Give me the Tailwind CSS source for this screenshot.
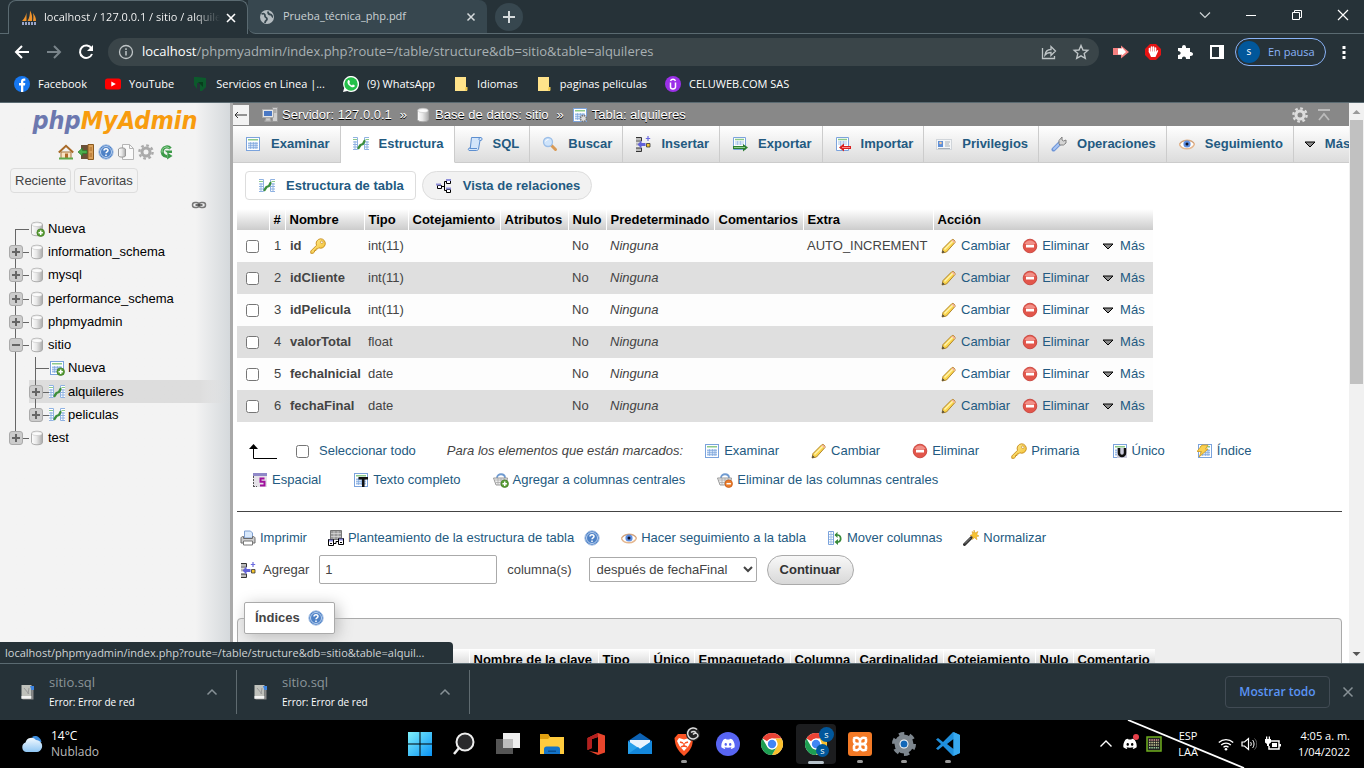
<!DOCTYPE html>
<html lang="es">
<head>
<meta charset="utf-8">
<title>localhost / 127.0.0.1 / sitio / alquileres | phpMyAdmin</title>
<script src="https://cdn.jsdelivr.net/npm/@tailwindcss/browser@4"></script>
</head>
<body class="flex h-screen flex-col overflow-hidden bg-white font-['Open_Sans','Noto_Sans',sans-serif] text-xs">

<!-- Icon sprite -->
<svg class="absolute size-0" xmlns="http://www.w3.org/2000/svg">
  <defs>
    <linearGradient id="gDb" x1="0" x2="1"><stop offset="0" stop-color="#fff"/><stop offset=".45" stop-color="#e8e8e8"/><stop offset="1" stop-color="#aaa"/></linearGradient>
    <linearGradient id="gWin" x1="0" y1="0" x2="1" y2="1"><stop offset="0" stop-color="#7ff1fb"/><stop offset="1" stop-color="#0a93f5"/></linearGradient>
    <linearGradient id="gCloud" x1="0" y1="0" x2="0" y2="1"><stop offset="0" stop-color="#f2f9ff"/><stop offset="1" stop-color="#8fc6f3"/></linearGradient>
    <linearGradient id="gKey" x1="0" y1="0" x2="1" y2="1"><stop offset="0" stop-color="#fff2a0"/><stop offset="1" stop-color="#f2b920"/></linearGradient>
  </defs>
  <symbol id="grid" viewBox="0 0 16 16"><rect x="1.500" y="1.500" width="13" height="13" fill="#fff" stroke="#7ba3dc"/><rect x="3" y="3" width="10" height="1.500" fill="#8cc98a"/><path d="M3 6h10v7H3z" fill="#cfe0f5"/><path d="M3 7.500h10M3 9.500h10M3 11.500h10M5.500 6v7M8.500 6v7M11 6v7" stroke="#7ba3dc" stroke-width=".6"/></symbol>
  <symbol id="struct" viewBox="0 0 16 16"><path d="M0 1h5v13H0zM11 1h5v13h-5z" fill="#fff"/><path d="M0 1.500h4.500v12H0M16 1.500h-4.500v12H16M0 6h5M0 8.500h5M0 11h5M11.500 6H16M11.500 8.500H16M11.500 11H16M2 5v9M14 5v9" fill="none" stroke="#8fb2e2"/><path d="M0 3.500h4M12.500 3.500H16" stroke="#8cc98a"/><path d="M5.500 12l2-3 2.500-1 1.500-3" fill="none" stroke="#3c8e3c" stroke-width="2.300" stroke-linecap="round" stroke-linejoin="round"/></symbol>
  <symbol id="sql" viewBox="0 0 16 16"><path d="M4.500 1.500H14c1.500.5 1.500 2.500 0 3h-1L11.500 13c-.3 1-1 1.500-2 1.500H2c-1-.6-1-2 .3-2.500h1z" fill="#d3e5fa" stroke="#5d8fd0"/><path d="M2.500 12.500h7.500M12.500 4.500c-1-1-.5-2.500.5-3" fill="none" stroke="#5d8fd0"/></symbol>
  <symbol id="search" viewBox="0 0 16 16"><path d="M9.500 9.500l4 4" stroke="#d99a55" stroke-width="3" stroke-linecap="round"/><circle cx="6" cy="6" r="4.500" fill="#cfe4fb" stroke="#9dbfe8" stroke-width="1.300"/><path d="M3.500 5.500a3 3 0 0 1 3-2" fill="none" stroke="#fff"/></symbol>
  <symbol id="insert" viewBox="0 0 16 16"><path d="M1 1h5v3H1zM1 12h5v3H1zM1 6.500h4v3H1z" fill="#bbb"/><path d="M1 1.500h5.500V5H1M1 15.500h5.500V12H1" fill="none" stroke="#333"/><path d="M2.500 8.500l4-4v2.500h4v3h-4v2.500z" fill="#6262d8"/><path d="M11.500 7.500h3.500v3.500h-3.500z" fill="#f5c52c" stroke="#333" stroke-width=".8"/><path d="M13 0v5M10.800 2.500h4.400" stroke="#6b6be0" stroke-width="1.200"/></symbol>
  <symbol id="export" viewBox="0 0 16 16"><path d="M1.500 1.500h12v12h-12z" fill="#fff" stroke="#7ba3dc"/><path d="M3 3.500h9" stroke="#8cc98a" stroke-width="1.500"/><path d="M3 6h9M3 8h9M5.500 5v4M8.500 5v4" stroke="#a9c4ea"/><path d="M1 11.500h11" stroke="#2e7d32" stroke-width="3"/><path d="M11 8l5 3.500-5 4z" fill="#2e7d32"/><path d="M2 11.500h11" stroke="#8cd08c"/></symbol>
  <symbol id="import" viewBox="0 0 16 16"><path d="M1.500 1.500h12v13h-12z" fill="#fff" stroke="#7ba3dc"/><path d="M3 3.500h9" stroke="#8cc98a" stroke-width="1.500"/><path d="M3 6h9M3 8h9M5.500 5v8M8.500 5v4" stroke="#a9c4ea"/><path d="M8 11.500h8" stroke="#d82020" stroke-width="3"/><path d="M9 7.500l-5 4 5 4z" fill="#d82020"/><path d="M7 11.500h8" stroke="#ff8a8a"/></symbol>
  <symbol id="priv" viewBox="0 0 16 16"><rect x=".5" y="3.500" width="15" height="10" fill="#f4f6f8" stroke="#d0d5da"/><rect x="2" y="5" width="5" height="6" fill="#5d8fd8"/><circle cx="4.500" cy="7" r="1.300" fill="#f4c9a0"/><path d="M9 6h5M9 8h4M9 10h5M2 12.500h12" stroke="#a8b0b8"/></symbol>
  <symbol id="ops" viewBox="0 0 16 16"><path d="M2.500 13.500L9 7" stroke="#6f96d8" stroke-width="4" stroke-linecap="round"/><path d="M3 13L8.500 7.500" stroke="#a9c5f2" stroke-width="2" stroke-linecap="round"/><path d="M8 8V4.500L11 1v3l1.500 1L15 4v3l-2.500 2H9z" fill="#d5d5d5" stroke="#808080"/></symbol>
  <symbol id="eye" viewBox="0 0 16 16"><path d="M.5 8.500C3 3.500 12 2.500 15.500 8 13 14 3.500 14.500.5 8.500z" fill="#fff" stroke="#e4b790" stroke-width="1.500"/><path d="M1 7.500C4 3.500 12 3.500 15 7" fill="none" stroke="#c9a080"/><circle cx="8" cy="8" r="3.600" fill="#5d8de0"/><circle cx="8" cy="8" r="1.500" fill="#112"/></symbol>
  <symbol id="tri" viewBox="0 0 16 16"><path d="M3 6h10L8 11z" fill="#8a8a8a" stroke="#000"/></symbol>
  <symbol id="pencil" viewBox="0 0 16 16"><path d="M1 15l1-4.500L11 1.500c1-.8 3.600 1.500 3 3L5.500 14z" fill="#fbd64e" stroke="#a87a20" stroke-width=".9"/><path d="M3.500 11.500L12 3" stroke="#fff3b0" stroke-width="1.500"/><path d="M10.500 2.300l3 3 .8-1.300-2.500-2.500z" fill="#f3b0a0"/><path d="M1 15l.7-2.800 2 2z" fill="#444"/></symbol>
  <symbol id="del" viewBox="0 0 16 16"><circle cx="8" cy="8" r="6.800" fill="#e2564b" stroke="#c43a32" stroke-width=".8"/><path d="M2.500 6a6 6 0 0 1 11 0z" fill="#f19088"/><rect x="4" y="6.700" width="8" height="2.800" fill="#fff"/></symbol>
  <symbol id="key" viewBox="0 0 16 16"><path d="M10.500.8a4.700 4.700 0 1 1-1.800 9L7.500 11H6v1.500H4.500V14L3 15.300H.8V13l5.700-5.700A4.700 4.700 0 0 1 10.500.8z" fill="url(#gKey)" stroke="#c58a1a" stroke-width=".9"/><circle cx="11.800" cy="4.200" r="1.300" fill="#fff" stroke="#c58a1a" stroke-width=".7"/></symbol>
  <symbol id="unique" viewBox="0 0 16 16"><use href="#grid"/><rect x="5" y="5" width="10" height="10" fill="#ccd"/><path d="M7 5v5a3 3 0 0 0 6 0V5" fill="none" stroke="#111" stroke-width="2.500"/></symbol>
  <symbol id="index" viewBox="0 0 16 16"><use href="#grid"/><path d="M5 2h6L8.500 6H11L2 14l2.500-5.500H0z" fill="#fbd050" stroke="#d09a1c" stroke-width=".8"/></symbol>
  <symbol id="spatial" viewBox="0 0 16 16"><rect x="1" y="1" width="14" height="14" fill="#e5e2e8"/><path d="M1 2.500h14" stroke="#8f88c8" stroke-width="3"/><path d="M1.500 4v11M1 14.500h4" stroke="#555" stroke-dasharray="2 1"/><path d="M12.500 6.500H8.500v3.300h4v3.700h-4.500" fill="none" stroke="#a0109c" stroke-width="2"/></symbol>
  <symbol id="fulltext" viewBox="0 0 16 16"><use href="#grid"/><path d="M5.500 5H15v2.500h-3.500V15H9V7.500H5.500z" fill="#111"/></symbol>
  <symbol id="basket" viewBox="0 0 16 16"><path d="M4 6c0-5 8-5 8 0" fill="none" stroke="#6f9ad0" stroke-width="1.800"/><path d="M.5 6h14l-1.500 7H3z" fill="#eee" stroke="#999"/><path d="M2 8h12M2.500 10.500h11M5 6v7M8 6v7M11 6v7" stroke="#aaa" stroke-width=".8"/></symbol>
  <symbol id="plusdot" viewBox="0 0 16 16"><circle cx="11.700" cy="11.700" r="3.800" fill="#5a9e36" stroke="#3c7a1e" stroke-width=".7"/><path d="M11.700 9.500v4.400M9.500 11.700h4.400" stroke="#fff" stroke-width="1.500"/></symbol>
  <symbol id="cadd" viewBox="0 0 16 16"><use href="#basket"/><use href="#plusdot"/></symbol>
  <symbol id="cdel" viewBox="0 0 16 16"><use href="#basket"/><circle cx="11.700" cy="11.700" r="3.800" fill="#ea7c2a" stroke="#c4540e" stroke-width=".7"/><path d="M9.500 11.700h4.400" stroke="#fff" stroke-width="1.500"/></symbol>
  <symbol id="print" viewBox="0 0 16 16"><path d="M4.500 1h6l2 2v5h-8z" fill="#d8e8fb" stroke="#7f9fd0"/><path d="M1 8.500C1 7 2 6.500 3.500 6.500v2h9v-2c1.500 0 2.500.5 2.500 2V13H1z" fill="#cfcfcf" stroke="#6a6a6a"/><path d="M3.500 11h9v4h-9z" fill="#fff" stroke="#777"/></symbol>
  <symbol id="propose" viewBox="0 0 16 16"><path d="M2.500.5h11v9h-11z" fill="#999" stroke="#777"/><path d="M3 3.500h10M3 6.500h10M6 1v8M10 1v8" stroke="#ddd" stroke-width=".7"/><path d="M.5 9.500h5v6h-5zM10.500 8.500h5v6h-5z" fill="#fff" stroke="#000"/><path d="M1 10.500h4M11 9.500h4" stroke="#8f8fd8" stroke-width="2"/><path d="M6 13.500h2v-2h2M2 13.500h2M12 12.500h2" fill="none" stroke="#000"/></symbol>
  <symbol id="relview" viewBox="0 0 16 16"><path d="M6 8.500h2.500M10 3.500H8.500v9H10" fill="none" stroke="#000"/><path d="M10.500 2.500h4v3h-4zM10.500 11.500h4v3h-4zM1.500 7.500h4v3h-4z" fill="#fff" stroke="#000"/><path d="M10 2h5M10 10.500h5M0 6.500h5" stroke="#8f8fd8" stroke-width="2"/></symbol>
  <symbol id="move" viewBox="0 0 16 16"><path d="M1.500 1.500h5v13h-5z" fill="#fff" stroke="#7ba3dc"/><path d="M2 4.500h4M2 7h4M2 9.500h4M2 12h4M4 2v12" stroke="#9fbfe8"/><path d="M8 5h2.500c3.500 0 4.500 5.500 1 7H9.500" fill="none" stroke="#3a8a3a" stroke-width="1.700"/><path d="M10.500 1.800V8L7.500 5zM11 9v6l-3.500-3z" fill="#3a8a3a"/></symbol>
  <symbol id="wand" viewBox="0 0 16 16"><path d="M1.500 14.500L8.500 7.500" stroke="#333" stroke-width="3" stroke-linecap="round"/><path d="M2 13.500l5.500-5.500" stroke="#888"/><path d="M11 0l1 3 3-1.500L13.700 4.500 16 6l-2.700.7.700 3-2.500-2-2 1.800.3-3L7 5.500l2.700-1.200L9 1.500l1.800 1.200z" fill="#f7c331" stroke="#d8961a" stroke-width=".5"/></symbol>
  <symbol id="help" viewBox="0 0 16 16"><circle cx="8" cy="8" r="7.200" fill="#4d81c6" stroke="#a9c3e6" stroke-width="1"/><circle cx="8" cy="8" r="5.500" fill="none" stroke="#b9d0ef"/><path d="M6 6.500c0-2.400 4-2.400 4 0C10 8 8 7.800 8 9.300M8 10.500v1.500" fill="none" stroke="#fff" stroke-width="1.500"/></symbol>
  <symbol id="home" viewBox="0 0 16 16"><path d="M3 8h10v6.500H3z" fill="#fae3c4" stroke="#a5773f"/><path d="M.8 8.500L8 1.800l7.200 6.700" fill="none" stroke="#a86a28" stroke-width="2"/><path d="M7 9.500h3v5H7z" fill="#b06a2a"/><path d="M1 14.500h14" stroke="#5fa84a" stroke-width="2"/></symbol>
  <symbol id="exit" viewBox="0 0 16 16"><path d="M3 1h8v14H3z" fill="#6b5038"/><path d="M10 .5h5.500v15H10z" fill="#d9a05a" stroke="#8a5a20"/><path d="M11.500 3h2.500v4h-2.500zM11.500 9h2.500v4h-2.500z" fill="#c08440"/><path d="M0 8l4.500-4v2.500H9v3H4.500V12z" fill="#4bae4b" stroke="#2b7a2b" stroke-width=".7"/></symbol>
  <symbol id="docs" viewBox="0 0 16 16"><path d="M4.500.5h7l4 4v11h-11z" fill="#fafafa" stroke="#b5b5b5"/><path d="M11.500.5v4h4" fill="none" stroke="#b5b5b5"/><path d="M.5 5c1-1.500 6-1.500 7 0v7c-1 1.500-6 1.500-7 0z" fill="url(#gDb)" stroke="#999"/></symbol>
  <symbol id="gear" viewBox="0 0 16 16"><circle cx="8" cy="8" r="6.600" fill="none" stroke="currentColor" stroke-width="2.400" stroke-dasharray="2.700 2.480"/><circle cx="8" cy="8" r="4" fill="none" stroke="currentColor" stroke-width="3"/></symbol>
  <symbol id="reload2" viewBox="0 0 16 16"><path d="M12.500 4.500A4.800 4.800 0 1 0 9 12.500" fill="none" stroke="#3c9a48" stroke-width="3.200"/><path d="M6.500 6.500H14V9H9.500z" fill="#3c9a48"/><path d="M9.500 8.500l5 3.500-5.500 3.500z" fill="#3c9a48"/><path d="M11.500 4.200A4.500 4.500 0 0 0 4 8.500" fill="none" stroke="#9ad8a0"/></symbol>
  <symbol id="link" viewBox="0 0 16 16"><rect x="1.500" y="5.500" width="6.500" height="5" rx="2.500" fill="none" stroke="#777" stroke-width="1.500"/><rect x="8" y="5.500" width="6.500" height="5" rx="2.500" fill="none" stroke="#777" stroke-width="1.500"/><path d="M4.500 8h7" stroke="#444" stroke-width="1.500"/></symbol>
  <symbol id="db" viewBox="0 0 16 16"><path d="M2.500 3.500c0-3 11-3 11 0v9c0 3-11 3-11 0z" fill="url(#gDb)" stroke="#a5a5a5" stroke-width=".9"/><ellipse cx="8" cy="3.600" rx="5" ry="2" fill="#fbfbfb" stroke="#c5c5c5" stroke-width=".6"/></symbol>
  <symbol id="dbadd" viewBox="0 0 16 16"><use href="#db"/><use href="#plusdot"/></symbol>
  <symbol id="tbladd" viewBox="0 0 16 16"><use href="#grid"/><use href="#plusdot"/></symbol>
  <symbol id="server" viewBox="0 0 16 16"><path d="M10.500.5h5v14h-5z" fill="#cfcfcf" stroke="#999"/><path d="M11.500 3h3M11.500 5h3" stroke="#888"/><path d="M.5 2.500h11v8H.5z" fill="#e6e6e6" stroke="#aaa"/><path d="M2 4h8v5H2z" fill="#4a78c4"/><path d="M4 11.500h4v2H4zM2.500 14h7" fill="#ccc" stroke="#bbb"/></symbol>
  <symbol id="tblgear" viewBox="0 0 16 16"><use href="#grid"/><circle cx="11.500" cy="11.500" r="3" fill="#ddd" stroke="#777" stroke-width="1.500" stroke-dasharray="1.600 .75"/></symbol>
  <symbol id="chrome" viewBox="0 0 24 24"><circle cx="12" cy="12" r="11" fill="#fff"/><path d="M12 1a11 11 0 0 1 9.530 5.500H12a5.500 5.500 0 0 0-4.760 2.750L2.470 6.500A11 11 0 0 1 12 1z" fill="#ea4335"/><path d="M21.530 6.500A11 11 0 0 1 12 23l4.760-8.250a5.500 5.500 0 0 0 0-5.500L15.500 6.500z" fill="#fbc02d"/><path d="M2.470 6.500A11 11 0 0 0 12 23l4.760-8.250a5.500 5.500 0 0 1-9.520 0z" fill="#1e9e52"/><circle cx="12" cy="12" r="5.400" fill="#fff"/><circle cx="12" cy="12" r="4.200" fill="#4285f4"/></symbol>
  <symbol id="discord" viewBox="0 0 24 24"><path d="M18.900 5.500A17 17 0 0 0 14.800 4.200l-.6 1.200a16 16 0 0 0-4.500 0L9.100 4.200A17 17 0 0 0 5 5.500C2.400 9.400 1.700 13.200 2 17a17 17 0 0 0 5.100 2.600l1.100-1.800-1.700-.9.400-.3a12 12 0 0 0 10.200 0l.4.300-1.700.9 1.100 1.800A17 17 0 0 0 22 17c.4-4.400-.7-8.200-3.100-11.500zM8.600 14.600c-1 0-1.800-.9-1.800-2s.8-2 1.800-2 1.800.9 1.800 2-.8 2-1.800 2zm6.700 0c-1 0-1.800-.9-1.800-2s.8-2 1.800-2 1.800.9 1.800 2-.8 2-1.800 2z" fill="#fff"/></symbol>
  <symbol id="folder" viewBox="0 0 16 16"><path d="M2 1h11v10.500h1V15H2z" fill="#ffe38a"/><path d="M12.500 11h2v3.500H12z" fill="#f2c94c"/></symbol>
  <symbol id="file" viewBox="0 0 16 16"><path d="M1.500 1h10v14h-10z" fill="#bfc1bb"/><path d="M1.500 12h10v2.500h-10z" fill="#f4f4f4"/><path d="M11.500 4h2v11.500h-11V15h9z" fill="#888"/><path d="M10 2h4v4h-2.500z" fill="#3d84e0"/><path d="M4 4l5 6M9 4l-1 6" stroke="#999"/></symbol>
</svg>

<!-- Browser chrome -->
<header class="flex shrink-0 flex-col bg-[#263238] text-white">
  <div class="flex h-[34px]">
    <div class="w-2 border-b border-[#5a6a71]"></div>
    <div class="flex w-[240px] items-center rounded-t-lg border-x border-t border-[#5a6a71] pr-2 pl-3">
      <svg class="size-4 shrink-0" viewBox="0 0 16 16"><path d="M1 11c3-3 4-6 4.500-8.500V11zM6.500 11c2-3 2.500-7 2.500-10.500 2 3 2.500 7 2 10.500zM12 11c.5-3 .5-5 0-8 2 2.500 3 5 3 8z" fill="#f0932b"/><path d="M1 13.500h14" stroke="#9aa5c8" stroke-width="3" stroke-dasharray="2 1"/></svg>
      <span class="ml-[7px] w-[176px] overflow-hidden bg-gradient-to-r from-white from-85% to-transparent bg-clip-text text-[11px] whitespace-nowrap text-transparent">localhost / 127.0.0.1 / sitio / alquileres</span>
      <button aria-label="Cerrar pestaña" class="ml-auto"><svg class="size-4" viewBox="0 0 16 16"><path d="M4 4l8 8M12 4l-8 8" stroke="#fff" stroke-width="1.600"/></svg></button>
    </div>
    <div class="flex w-[239px] items-center rounded-tr-lg rounded-bl-lg border-b border-[#5a6a71] bg-[#37474f] pr-2 pl-[11px] text-[#c9d1d4]">
      <svg class="size-4 shrink-0" viewBox="0 0 16 16"><circle cx="8" cy="8" r="7" fill="#b4bcc0"/><path d="M2.500 5C5 4 6 5 6 7s2 1 2 3-2 1-2 4" fill="none" stroke="#37474f" stroke-width="1.800"/><path d="M9 2.500c0 2 1 3 2.500 3S13 8 14 8" fill="none" stroke="#37474f" stroke-width="1.800"/></svg>
      <span class="ml-2 text-[11px]">Prueba_técnica_php.pdf</span>
      <button aria-label="Cerrar pestaña" class="ml-auto"><svg class="size-4" viewBox="0 0 16 16"><path d="M4.500 4.500l7 7M11.500 4.500l-7 7" stroke="#d5dadc" stroke-width="1.500"/></svg></button>
    </div>
    <div class="flex flex-1 items-center border-b border-[#5a6a71] pl-2">
      <button aria-label="Nueva pestaña" class="flex size-7 items-center justify-center rounded-full bg-[#37474f]"><svg class="size-4" viewBox="0 0 16 16"><path d="M8 2v12M2 8h12" stroke="#d5dadc" stroke-width="2"/></svg></button>
      <div class="mr-[13px] mb-1 ml-auto flex gap-[30px]">
        <button aria-label="Buscar pestañas"><svg class="size-4" viewBox="0 0 16 16"><path d="M3 5.500l5 5 5-5" fill="none" stroke="#cfd4d6" stroke-width="1.200"/></svg></button>
        <button aria-label="Minimizar"><svg class="size-4" viewBox="0 0 16 16"><path d="M3 8.500h10" stroke="#fff"/></svg></button>
        <button aria-label="Restaurar"><svg class="size-4" viewBox="0 0 16 16"><path d="M3.500 5.500h7v7h-7zM5.500 5V3.500h7v7H11" fill="none" stroke="#fff"/></svg></button>
        <button aria-label="Cerrar"><svg class="size-4" viewBox="0 0 16 16"><path d="M3 3l10 10M13 3L3 13" stroke="#fff" stroke-width="1.200"/></svg></button>
      </div>
    </div>
  </div>
  <div class="flex h-9 items-center pr-3 pl-3">
    <button aria-label="Atrás" class="mr-3"><svg class="size-5" viewBox="0 0 20 20"><path d="M17 10H4M10 4l-6 6 6 6" fill="none" stroke="#fff" stroke-width="2"/></svg></button>
    <button aria-label="Adelante" class="mr-3"><svg class="size-5" viewBox="0 0 20 20"><path d="M3 10h13M10 4l6 6-6 6" fill="none" stroke="#79848a" stroke-width="2"/></svg></button>
    <button aria-label="Recargar" class="mr-3"><svg class="size-5" viewBox="0 0 20 20"><path d="M15.500 6.500A6.200 6.200 0 1 0 16 12" fill="none" stroke="#fff" stroke-width="2"/><path d="M17 3v6h-6z" fill="#fff"/></svg></button>
    <div class="flex h-7 flex-1 items-center rounded-full bg-[#3a4549] pr-2 pl-[10px]">
      <svg class="size-4" viewBox="0 0 16 16"><circle cx="8" cy="8" r="6.500" fill="none" stroke="#bfc5c7" stroke-width="1.300"/><path d="M8 7v4.500M8 4.300v1.600" stroke="#bfc5c7" stroke-width="1.500"/></svg>
      <div class="ml-2 text-[13px] text-[#a9b1b4]"><span class="text-white">localhost</span>/phpmyadmin/index.php?route=/table/structure&amp;db=sitio&amp;table=alquileres</div>
      <button aria-label="Compartir" class="ml-auto"><svg class="size-5" viewBox="0 0 20 20"><path d="M3.500 6v10.500h12V14M6 13c.5-4 3-5.500 6-5.500V4.500l4.500 4.500-4.500 4.500v-3c-2.500 0-4.500.5-6 2.500z" fill="none" stroke="#bfc5c7" stroke-width="1.300"/></svg></button>
      <button aria-label="Añadir a marcadores" class="ml-3"><svg class="size-5" viewBox="0 0 20 20"><path d="M10 3.500l2 4.500 4.800.4-3.600 3.200 1.100 4.800L10 13.900l-4.300 2.500 1.100-4.800-3.600-3.200L8 8z" fill="none" stroke="#bfc5c7" stroke-width="1.400"/></svg></button>
    </div>
    <div class="mr-[10px] ml-[14px] flex gap-4">
      <svg class="size-4" viewBox="0 0 16 16"><path d="M0 4h8V1.500L16 8l-8 6.500V11H0z" fill="#f58080"/><path d="M5 4.500h4V3.500l4 4.500-4 3.500v-1H5z" fill="#fff"/></svg>
      <svg class="size-4" viewBox="0 0 16 16"><path d="M5 0h6l5 5v6l-5 5H5l-5-5V5z" fill="#e51313"/><path d="M4.500 8V4.500M6.500 8V3M8.500 8V3M10.500 8V4" stroke="#fff" stroke-width="1.600" stroke-linecap="round"/><path d="M3.700 7.500h7.600l1-1.500 1 .8L10.500 13H6z" fill="#fff"/></svg>
      <svg class="size-4" viewBox="0 0 16 16"><path d="M1 4h4C4.500 0 9.500 0 9 4h4v4c4-.5 4 4.500 0 4v3H9c.3-3.500-4.300-3.500-4 0H1v-4c3.500 0 3.500-4 0-4z" fill="#fff"/></svg>
      <svg class="size-4" viewBox="0 0 16 16"><path d="M2 2h12v12H2z" fill="none" stroke="#fff" stroke-width="2"/><path d="M10 2h4v12h-4z" fill="#fff"/></svg>
    </div>
    <button class="flex h-7 w-[91px] items-center rounded-full border border-[#8ab4f8] pl-[2px] text-[11px] text-[#8ab4f8]"><span class="mr-2 flex size-[22px] items-center justify-center rounded-full bg-[#01579b] text-[10px] text-white">s</span>En pausa</button>
    <button aria-label="Menú" class="ml-[10px]"><svg class="size-4" viewBox="0 0 16 16"><path d="M6.500 2h3v3h-3zM6.500 7h3v3h-3zM6.500 12h3v3h-3z" fill="#fff"/></svg></button>
  </div>
  <nav class="flex h-[33px] items-center gap-[18px] border-b border-[#5a6a71] pb-1 pl-[14px] text-[11px]">
    <a href="#" class="flex items-center gap-2"><svg class="size-4" viewBox="0 0 16 16"><circle cx="8" cy="8" r="8" fill="#1677f0"/><path d="M7 16V9.500H5V7h2V5.500C7 3.500 8 2.500 10 2.500h1.300v2.200h-1c-.8 0-1 .4-1 1V7h2L11 9.500H9.300V16z" fill="#fff"/></svg>Facebook</a>
    <a href="#" class="flex items-center gap-2"><svg class="size-4" viewBox="0 0 16 16"><rect y="2.500" width="16" height="11" rx="2.500" fill="#f00"/><path d="M6.300 5.500v5L10.800 8z" fill="#fff"/></svg>YouTube</a>
    <a href="#" class="flex items-center gap-2"><svg class="size-4" viewBox="0 0 16 16"><path d="M2 1h3l9 1v9l-4 4H8V7H5v6L2 9z" fill="#0c5a2c"/><path d="M6 6h5v5z" fill="#073d1c"/></svg>Servicios en Linea |...</a>
    <a href="#" class="flex items-center gap-2"><svg class="size-4" viewBox="0 0 16 16"><path d="M0 16l1.200-4A8 8 0 1 1 4.300 15z" fill="#fff"/><circle cx="8" cy="8" r="6.700" fill="#25c04a"/><path d="M5 4.500c1-1 1.500 0 2 1.500L6.300 7c.5 1 1.500 2 2.700 2.500l.8-1c1.200.3 2.500 1 2 1.800-2 3-8-1.500-7.300-4.800z" fill="#fff"/></svg>(9) WhatsApp</a>
    <a href="#" class="flex items-center gap-2"><svg class="size-4"><use href="#folder"/></svg>Idiomas</a>
    <a href="#" class="flex items-center gap-2"><svg class="size-4"><use href="#folder"/></svg>paginas peliculas</a>
    <a href="#" class="flex items-center gap-2"><svg class="size-4" viewBox="0 0 16 16"><circle cx="8" cy="8" r="8" fill="#9b30e8"/><path d="M5.500 6.500v4.500a2.500 2 0 0 0 5 0V6.500M5.500 4.800c1-2 4-2 5 0" fill="none" stroke="#fff" stroke-width="1.500"/></svg>CELUWEB.COM SAS</a>
  </nav>
</header>

<!-- phpMyAdmin -->
<div class="relative flex min-h-0 flex-1 overflow-hidden font-['Liberation_Sans',Arial,sans-serif] text-[13px] leading-4 text-[#444]">
  <aside class="flex w-[230px] shrink-0 flex-col bg-gradient-to-r from-[#f3f3f3] from-85% to-[#d5d9dc]">
    <a href="#" class="mt-1 text-center font-['DejaVu_Sans_Condensed','DejaVu_Sans',sans-serif] text-[25px] leading-7 font-bold text-[#f89c0e] italic"><span class="text-[#6c78af]">php</span>MyAdmin</a>
    <div class="mt-[9px] ml-[58px] flex gap-1 text-[#aaa]">
      <svg class="size-4"><use href="#home"/></svg><svg class="size-4"><use href="#exit"/></svg><svg class="size-4"><use href="#help"/></svg><svg class="size-4"><use href="#docs"/></svg><svg class="size-4"><use href="#gear"/></svg><svg class="size-4"><use href="#reload2"/></svg>
    </div>
    <div class="mt-2 ml-[10px] flex gap-[3px]">
      <button class="h-[25px] rounded border border-[#ddd] px-1">Reciente</button>
      <button class="h-[25px] rounded border border-[#ddd] px-1">Favoritas</button>
    </div>
    <svg class="mt-1 ml-[191px] size-4"><use href="#link"/></svg>
    <ul id="tree" class="mt-[4px] flex h-[233px] flex-col text-black"></ul>
  </aside>
  <div class="w-[3px] shrink-0 bg-[#aaa]"></div>

  <main class="flex min-w-0 flex-1 flex-col overflow-hidden bg-white">
    <div class="flex h-[23px] shrink-0 items-center bg-[#888] text-white [text-shadow:0_1px_0_#000]">
      <button aria-label="Ocultar panel" class="mr-[13px] flex h-5 w-4 items-center justify-center bg-[#f3f3f3]"><svg class="h-3 w-4" viewBox="0 0 16 12"><path d="M14 6H2M5 3L2 6l3 3" fill="none" stroke="#333"/></svg></button>
      <svg class="size-4"><use href="#server"/></svg><a href="#" class="ml-1">Servidor: 127.0.0.1</a><span class="mx-2">»</span>
      <svg class="size-4"><use href="#db"/></svg><a href="#" class="ml-1">Base de datos: sitio</a><span class="mx-2">»</span>
      <svg class="size-4"><use href="#tblgear"/></svg><a href="#" class="ml-1">Tabla: alquileres</a>
      <svg class="ml-auto size-4 text-[#ddd]"><use href="#gear"/></svg>
      <svg class="mr-[17px] ml-2 size-4" viewBox="0 0 16 16"><path d="M2 3h12M3 13l5-6 5 6" fill="none" stroke="#bbb" stroke-width="1.800"/></svg>
    </div>
    <nav class="flex h-[37px] shrink-0 overflow-hidden font-bold text-[#235a81]" id="tabs"></nav>
    <div class="mt-2 ml-3 flex shrink-0 gap-[6px] font-bold text-[#235a81]">
      <a href="#" class="flex h-[29px] items-center gap-[11px] rounded border border-[#ddd] bg-white pr-[11px] pl-[13px]"><svg class="size-4"><use href="#struct"/></svg>Estructura de tabla</a>
      <a href="#" class="flex h-[29px] items-center gap-[11px] rounded-full border border-[#ddd] bg-[#f2f2f2] pr-[11px] pl-[13px]"><svg class="size-4"><use href="#relview"/></svg>Vista de relaciones</a>
    </div>

    <table class="mt-[9px] ml-1 w-[916px] shrink-0 table-fixed border-collapse">
      <colgroup><col class="w-[32px]"><col class="w-[16px]"><col class="w-[79px]"><col class="w-[44px]"><col class="w-[92px]"><col class="w-[68px]"><col class="w-[38px]"><col class="w-[108px]"><col class="w-[89px]"><col class="w-[130px]"><col class="w-[220px]"></colgroup>
      <thead>
        <tr class="h-[21px] bg-gradient-to-b from-white to-[#ccc] text-left whitespace-nowrap text-black">
          <th></th><th class="border-l border-white pl-1">#</th><th class="border-l border-white pl-1">Nombre</th><th class="border-l border-white pl-1">Tipo</th><th class="border-l border-white pl-1">Cotejamiento</th><th class="border-l border-white pl-1">Atributos</th><th class="border-l border-white pl-1">Nulo</th><th class="border-l border-white pl-1">Predeterminado</th><th class="border-l border-white pl-1">Comentarios</th><th class="border-l border-white pl-1">Extra</th><th class="border-l border-white pl-1">Acción</th>
        </tr>
      </thead>
      <tbody id="columns"></tbody>
    </table>

    <div class="mt-[19px] ml-4 flex h-5 shrink-0 items-center whitespace-nowrap text-[#235a81]">
      <svg class="h-[15px] w-7" viewBox="0 0 28 15"><path d="M4.500 3v11.500H28" fill="none" stroke="#000"/><path d="M0 5h9L4.500 0z" fill="#000"/></svg>
      <label class="ml-[19px] flex items-center gap-[10px]"><input type="checkbox" class="size-[13px]">Seleccionar todo</label>
      <i class="mr-[21px] ml-[31px] text-[#444]">Para los elementos que están marcados:</i>
      <div class="flex gap-8">
        <button class="flex gap-1"><svg class="size-4"><use href="#grid"/></svg>Examinar</button>
        <button class="flex gap-1"><svg class="size-4"><use href="#pencil"/></svg>Cambiar</button>
        <button class="flex gap-1"><svg class="size-4"><use href="#del"/></svg>Eliminar</button>
        <button class="flex gap-1"><svg class="size-4"><use href="#key"/></svg>Primaria</button>
        <button class="flex gap-1"><svg class="size-4"><use href="#unique"/></svg>Único</button>
        <button class="flex gap-1"><svg class="size-4"><use href="#index"/></svg>Índice</button>
      </div>
    </div>
    <div class="mt-[9px] ml-[19px] flex h-5 shrink-0 items-center gap-8 whitespace-nowrap text-[#235a81]">
      <button class="flex gap-1"><svg class="size-4"><use href="#spatial"/></svg>Espacial</button>
      <button class="flex gap-1"><svg class="size-4"><use href="#fulltext"/></svg>Texto completo</button>
      <button class="flex gap-1"><svg class="size-4"><use href="#cadd"/></svg>Agregar a columnas centrales</button>
      <button class="flex gap-1"><svg class="size-4"><use href="#cdel"/></svg>Eliminar de las columnas centrales</button>
    </div>
    <hr class="mt-[21px] mr-[7px] ml-1 shrink-0 border-[#444]">
    <div class="mt-[18px] ml-[7px] flex shrink-0 gap-[21px] whitespace-nowrap text-[#235a81]">
      <a href="#" class="flex gap-1"><svg class="size-4"><use href="#print"/></svg>Imprimir</a>
      <span class="flex gap-1"><svg class="size-4"><use href="#propose"/></svg><a href="#">Planteamiento de la estructura de tabla</a><svg class="ml-[6px] size-4"><use href="#help"/></svg></span>
      <a href="#" class="flex gap-1"><svg class="size-4"><use href="#eye"/></svg>Hacer seguimiento a la tabla</a>
      <a href="#" class="flex gap-1"><svg class="size-4"><use href="#move"/></svg>Mover columnas</a>
      <a href="#" class="flex gap-1"><svg class="size-4"><use href="#wand"/></svg>Normalizar</a>
    </div>
    <form class="mt-2 ml-[7px] flex h-[31px] shrink-0 items-center whitespace-nowrap">
      <svg class="size-4"><use href="#insert"/></svg>
      <label for="num" class="mr-[10px] ml-[7px]">Agregar</label>
      <input id="num" type="text" value="1" class="h-[29px] w-[178px] rounded-xs border border-[#aaa] bg-white px-[5px]">
      <label for="pos" class="mr-[17px] ml-[10px]">columna(s)</label>
      <select id="pos" class="h-[25px] w-[168px] rounded-xs border border-[#aaa] bg-white pl-[3px]"><option>después de fechaFinal</option></select>
      <button type="button" class="ml-[10px] h-[30px] rounded-full border border-[#aaa] bg-gradient-to-b from-[#f8f8f8] to-[#d8d8d8] px-3 font-bold text-[#333]">Continuar</button>
    </form>
    <fieldset class="mt-[17px] mr-[7px] ml-1 h-40 shrink-0 rounded-t border border-[#aaa] bg-[#eee] px-[6px]">
      <legend class="flex h-8 items-center gap-2 rounded-xs border border-[#aaa] bg-white px-[10px] font-bold shadow-[3px_3px_15px_#bbb]">Índices <svg class="size-4"><use href="#help"/></svg></legend>
      <table class="mt-[15px] w-[911px] table-fixed border-collapse">
        <colgroup><col class="w-[225px]"><col class="w-[129px]"><col class="w-[51px]"><col class="w-[45px]"><col class="w-[96px]"><col class="w-[65px]"><col class="w-[88px]"><col class="w-[92px]"><col class="w-[38px]"><col class="w-[82px]"></colgroup>
        <thead><tr class="h-[22px] bg-gradient-to-b from-white to-[#ccc] text-left whitespace-nowrap text-black"><th></th><th class="border-l border-white pl-1">Nombre de la clave</th><th class="border-l border-white pl-1">Tipo</th><th class="border-l border-white pl-1">Único</th><th class="border-l border-white pl-1">Empaquetado</th><th class="border-l border-white pl-1">Columna</th><th class="border-l border-white pl-1">Cardinalidad</th><th class="border-l border-white pl-1">Cotejamiento</th><th class="border-l border-white pl-1">Nulo</th><th class="border-l border-white pl-1">Comentario</th></tr></thead>
      </table>
    </fieldset>
  </main>

  <!-- Scrollbar -->
  <div class="flex w-[15px] shrink-0 flex-col items-center bg-[#f1f1f1]">
    <svg class="h-[17px] w-[15px]" viewBox="0 0 15 17"><path d="M3.500 11h8l-4-4z" fill="#999"/></svg>
    <div class="h-[264px] w-[13px] bg-[#c1c1c1]"></div>
    <svg class="mt-auto h-[17px] w-[15px]" viewBox="0 0 15 17"><path d="M3.500 6h8l-4 4z" fill="#555"/></svg>
  </div>
  <div class="absolute bottom-0 left-0 flex h-[21px] w-[453px] items-center rounded-tr bg-[#263238] pl-[5px] font-['Open_Sans',sans-serif] text-[11px] whitespace-nowrap text-[#cfd4d6]">localhost/phpmyadmin/index.php?route=/table/structure&amp;db=sitio&amp;table=alquil...</div>
</div>

<!-- Downloads bar -->
<section class="flex h-[57px] shrink-0 items-center border-t border-[#5a6a71] bg-[#263238]">
  <div class="flex h-11 w-[237px] items-center border-r border-[#5f6b70] pr-4 pl-5">
    <svg class="size-4"><use href="#file"/></svg>
    <div class="ml-[13px]"><p class="text-[13px] leading-5 text-[#8b9599]">sitio.sql</p><p class="text-[10px] leading-5 text-white">Error: Error de red</p></div>
    <button aria-label="Opciones" class="ml-auto"><svg class="size-4" viewBox="0 0 16 16"><path d="M3.500 10.500L8 6l4.500 4.500" fill="none" stroke="#879196" stroke-width="1.500"/></svg></button>
  </div>
  <div class="flex h-11 w-[233px] items-center border-r border-[#5f6b70] pr-4 pl-4">
    <svg class="size-4"><use href="#file"/></svg>
    <div class="ml-[13px]"><p class="text-[13px] leading-5 text-[#8b9599]">sitio.sql</p><p class="text-[10px] leading-5 text-white">Error: Error de red</p></div>
    <button aria-label="Opciones" class="ml-auto"><svg class="size-4" viewBox="0 0 16 16"><path d="M3.500 10.500L8 6l4.500 4.500" fill="none" stroke="#879196" stroke-width="1.500"/></svg></button>
  </div>
  <button class="ml-auto h-8 w-[105px] rounded border border-[#414b54] text-xs font-semibold text-[#5a94f5]">Mostrar todo</button>
  <button aria-label="Cerrar descargas" class="mr-2 ml-[10px]"><svg class="size-4" viewBox="0 0 16 16"><path d="M3.500 3.500l9 9M12.500 3.500l-9 9" stroke="#879196" stroke-width="1.500"/></svg></button>
</section>

<!-- Taskbar -->
<footer class="relative grid h-12 shrink-0 grid-cols-[1fr_auto_1fr] items-center bg-black pl-1 text-white">
  <div class="flex items-center pl-4">
    <svg class="h-6 w-6" viewBox="0 0 24 24"><path d="M12 5c3-2 8-1 9.500 5l-5 1z" fill="#3f8fe0"/><path d="M6 20a5 5 0 0 1-.5-9.500A6 6 0 0 1 16 8c4 0 7 4 6 7.500-.7 2.500-3 4.500-5 4.500z" fill="url(#gCloud)"/></svg>
    <div class="ml-[7px] leading-4"><p>14°C</p><p class="text-[#bbb]">Nublado</p></div>
  </div>
  <div class="flex h-12">
    <button aria-label="Inicio" class="flex w-11 items-center justify-center"><svg class="size-6" viewBox="0 0 24 24"><path d="M0 0h11.500v11.500H0zM12.500 0H24v11.500H12.500zM0 12.500h11.500V24H0zM12.500 12.500H24V24H12.500z" fill="url(#gWin)"/></svg></button>
    <button aria-label="Buscar" class="flex w-11 items-center justify-center"><svg class="size-6" viewBox="0 0 24 24"><circle cx="13" cy="10" r="8.500" fill="#2a2a2c" stroke="#eee" stroke-width="2"/><path d="M7 16l-5 6" stroke="#eee" stroke-width="2.500"/></svg></button>
    <button aria-label="Vista de tareas" class="flex w-11 items-center justify-center"><svg class="size-6" viewBox="0 0 24 24"><path d="M7 1h17v15H7z" fill="#eee"/><path d="M0 7h17v15H0z" fill="#555"/><path d="M7 7h10v9H7z" fill="#bdbdbd"/></svg></button>
    <button aria-label="Explorador" class="flex w-11 items-center justify-center"><svg class="size-6" viewBox="0 0 24 24"><path d="M0 2h8l2 3h14v17H0z" fill="#ffcb3d"/><path d="M0 2h8l2 3-2 2H0z" fill="#e0a010"/><path d="M4 22v-5c0-1.500 1-2.500 2.500-2.500h11c1.500 0 2.500 1 2.500 2.500v5z" fill="#1373c8"/><path d="M8 18.500h8V20H8z" fill="#0a4f90"/></svg></button>
    <button aria-label="Office" class="flex w-11 items-center justify-center"><svg class="size-6" viewBox="0 0 24 24"><path d="M14 1l7 2.500v17L14 23l-9-4 9 1.500V5L8 7v9l-4.500 2V6z" fill="#e8452c"/><path d="M14 1l-10.500 5v12L8 16V7l6-2z" fill="#b31f1f"/></svg></button>
    <button aria-label="Correo" class="flex w-11 items-center justify-center"><svg class="size-6" viewBox="0 0 24 24"><path d="M0 9L12 1l12 8v13H0z" fill="#0c62b4"/><path d="M2 8h20v4l-10 8L2 12z" fill="#e8f3fd"/><path d="M0 9l12 8 12-8v13H0z" fill="#28a0ea"/><path d="M0 22l10-7 2 2 12-8v13z" fill="#1488dc"/></svg></button>
    <button aria-label="Brave" class="relative flex w-11 items-center justify-center"><svg class="size-6" viewBox="0 0 24 24"><path d="M6 2h11l4 4-.5 5c-.5 5-4 9-8.500 13C7.500 20 4 16 3 10L2.500 6z" fill="#fb5424"/><path d="M7 6l5 1.500L17 6l2 3-2.500 5-4.500 5-4.500-5L5 9z" fill="#fff"/><path d="M8 10l3 1M16 10l-3 1M12 11v4M9 15l3-1.500 3 1.500" stroke="#fb5424" stroke-width="1.500"/></svg><svg class="absolute top-[7px] right-[6px] size-[14px]" viewBox="0 0 14 14"><circle cx="7" cy="7" r="7" fill="#222"/><path d="M11 2.500A5.500 5.500 0 1 0 12 9C12 6 9 5.500 7 7.500M5 5.500c2-2 5-1 5 1" fill="none" stroke="#ddd" stroke-width="1.500"/></svg><span class="absolute bottom-[5px] h-[3px] w-[6px] rounded-full bg-[#999]"></span></button>
    <button aria-label="Discord" class="flex w-11 items-center justify-center"><span class="flex size-6 items-center justify-center rounded-full bg-[#5865f2]"><svg class="size-4"><use href="#discord"/></svg></span></button>
    <button aria-label="Chrome" class="flex w-11 items-center justify-center"><svg class="size-6"><use href="#chrome"/></svg></button>
    <button aria-label="Chrome, perfil s" class="relative mx-[2px] my-1 flex w-10 items-center justify-center rounded bg-[#1c1d1f]"><svg class="size-6"><use href="#chrome"/></svg><span class="absolute top-[3px] right-[2px] flex size-[15px] items-center justify-center rounded-full bg-[#01579b] text-[9px]">s</span><span class="absolute right-[7px] bottom-[7px] flex size-[13px] items-center justify-center rounded-full bg-[#01579b] text-[9px]">s</span><span class="absolute bottom-0 h-[3px] w-4 rounded-full bg-[#b8c4cc]"></span></button>
    <button aria-label="XAMPP" class="relative flex w-11 items-center justify-center"><svg class="size-6" viewBox="0 0 24 24"><rect width="24" height="24" rx="3" fill="#f37a26"/><path d="M5.500 6.500C9 5 11 6 12 8.500 13 6 15 5 18.500 6.500M5.500 17.500C9 19 11 18 12 15.500 13 18 15 19 18.500 17.500M6 6.500v3C6 11 8 12 12 12s6-1 6-2.500v-3M6 17.500v-3C6 13 8 12 12 12s6 1 6 2.500v3M12 8.500v7" fill="none" stroke="#fff" stroke-width="2.600" stroke-linejoin="round"/></svg><span class="absolute bottom-[5px] h-[3px] w-[6px] rounded-full bg-[#999]"></span></button>
    <button aria-label="Configuración" class="relative flex w-11 items-center justify-center"><svg class="size-6" viewBox="0 0 24 24"><circle cx="12" cy="12" r="10" fill="none" stroke="#7d868e" stroke-width="4" stroke-dasharray="5.200 5.270"/><circle cx="12" cy="12" r="7" fill="#fff" stroke="#7d868e" stroke-width="5"/><circle cx="12" cy="12" r="3.500" fill="#1267b8"/></svg><span class="absolute bottom-[5px] h-[3px] w-[6px] rounded-full bg-[#999]"></span></button>
    <button aria-label="Visual Studio Code" class="relative flex w-11 items-center justify-center"><svg class="size-6" viewBox="0 0 24 24"><path d="M17 0l7 3v18l-7 3L7 14l-5 4-2-1.500L5 12 0 7.500 2 6l5 4zM17.500 7L11 12l6.500 5z" fill="#1f8fdc" fill-rule="evenodd"/><path d="M17.500 0L24 3v18l-6.500 3z" fill="#37a9f0"/></svg><span class="absolute bottom-[5px] h-[3px] w-[6px] rounded-full bg-[#999]"></span></button>
  </div>
  <div class="flex items-center justify-end pr-[14px]">
    <svg class="size-4" viewBox="0 0 16 16"><path d="M2.500 10.500L8 5l5.500 5.500" fill="none" stroke="#fff" stroke-width="1.400"/></svg>
    <span class="relative ml-2"><svg class="size-4"><use href="#discord"/></svg><span class="absolute -top-[2px] -right-[1px] size-[6px] rounded-full bg-[#e8404a]"></span></span>
    <svg class="ml-2 size-4" viewBox="0 0 16 16"><rect x="1" y="1" width="14" height="14" fill="#222" stroke="#6fae1e" stroke-width="1.500"/><path d="M3 4h10" stroke="#d99" stroke-width="1.500" stroke-dasharray="1.500 .8"/><path d="M3 6.500h10M3 9h10" stroke="#cc9" stroke-width="1.500" stroke-dasharray="1.500 .8"/><path d="M3 11.700h10" stroke="#9c9" stroke-width="1.500" stroke-dasharray="1.500 .8"/></svg>
    <p class="ml-4 text-center text-[11px] leading-4">ESP<br>LAA</p>
    <svg class="ml-5 size-4" viewBox="0 0 16 16"><path d="M.8 6.500a10.500 10.500 0 0 1 14.400 0M3.200 9a7 7 0 0 1 9.600 0M5.500 11.300a3.800 3.800 0 0 1 5 0" fill="none" stroke="#fff" stroke-width="1.300"/><circle cx="8" cy="13.300" r="1.300" fill="#fff"/></svg>
    <svg class="ml-[7px] size-4" viewBox="0 0 16 16"><path d="M1 6h2.500L7.500 2.500v11L3.500 10H1z" fill="none" stroke="#fff" stroke-width="1.200"/><path d="M9.500 6c1 1 1 3 0 4M11.500 4c2 2 2 6 0 8" fill="none" stroke="#fff"/><path d="M13.500 2.500c3 3 3 8 0 11" fill="none" stroke="#666"/></svg>
    <svg class="ml-2 size-4" viewBox="0 0 16 16"><path d="M4.500 5H14v8H4v-3" fill="none" stroke="#fff" stroke-width="1.500"/><path d="M7 7h5v4H7zM14 8h2v2.500h-2zM0 3h6v3.500L4 8v2H2V8L0 6.500zM1 .5h1.300V3H1zM3.700.5H5V3H3.700z" fill="#fff"/></svg>
    <p class="ml-[17px] text-right text-[11px] leading-4">4:05 a. m.<br>1/04/2022</p>
  </div>
  <svg class="absolute top-0 right-[118px] h-12 w-[120px]" viewBox="0 0 120 48"><path d="M2 0L118 48" stroke="#fff" stroke-width="1.800"/></svg>
</footer>

<script>
const tabs = [["grid","Examinar"],["struct","Estructura"],["sql","SQL"],["search","Buscar"],["insert","Insertar"],["export","Exportar"],["import","Importar"],["priv","Privilegios"],["ops","Operaciones"],["eye","Seguimiento"],["tri","Más"]];
document.getElementById("tabs").innerHTML = tabs.map(([i,t]) => `<a href="#" class="flex shrink-0 items-center border-r border-b border-r-[#ccc] pr-[10px] ${t==="Más" ? "gap-[7px] pl-2" : "gap-[10px] pl-3"} ${t==="Estructura" ? "border-b-white bg-white" : "border-b-[#ccc] bg-gradient-to-b from-white to-[#dcdcdc]"}"><svg class="size-4"><use href="#${i}"/></svg>${t}</a>`).join("");

const cols = [["id","int(11)"],["idCliente","int(11)"],["idPelicula","int(11)"],["valorTotal","float"],["fechaInicial","date"],["fechaFinal","date"]];
document.getElementById("columns").innerHTML = cols.map(([n,t],k) => `<tr class="h-8 whitespace-nowrap ${k%2 ? "bg-[#dfdfdf]" : "bg-[#fdfdfd]"}">
  <td class="pl-[9px]"><input type="checkbox" id="c${k}" class="block size-[13px]"></td><td class="pl-[5px]">${k+1}</td>
  <th class="pl-[5px] text-left"><label for="c${k}" class="flex items-center gap-2">${n}${k ? "" : '<svg class="size-4"><use href="#key"/></svg>'}</label></th>
  <td class="pl-1">${t}</td><td></td><td></td><td class="pl-1">No</td><td class="pl-1"><i>Ninguna</i></td><td></td><td class="pl-1">${k ? "" : "AUTO_INCREMENT"}</td>
  <td class="pl-2 text-[#235a81]"><div class="flex"><a href="#" class="mr-3 flex gap-1"><svg class="size-4"><use href="#pencil"/></svg>Cambiar</a><a href="#" class="mr-[11px] flex gap-1"><svg class="size-4"><use href="#del"/></svg>Eliminar</a><a href="#" class="flex gap-1"><svg class="size-4"><use href="#tri"/></svg>Más</a></div></td></tr>`).join("");

/* [label, icon, toggle, level] */
const tree = [["Nueva","dbadd","",1],["information_schema","db","+",1],["mysql","db","+",1],["performance_schema","db","+",1],["phpmyadmin","db","+",1],["sitio","db","-",1],["Nueva","tbladd","",2],["alquileres","struct","+",2],["peliculas","struct","+",2],["test","db","+",1]];
const vline = (first, last) => `<span class="absolute left-[6px] w-px bg-[#666] ${first ? "top-1/2 bottom-0" : last ? "top-0 bottom-1/2" : "top-0 bottom-0"}"></span>`;
const toggle = s => s ? `<button aria-label="Expandir/Contraer" class="relative flex size-[14px] items-center justify-center rounded-[3px] border border-[#aaa] bg-[#ccc]"><svg class="size-[8px]" viewBox="0 0 8 8"><path d="${s==="+" ? "M0 4h8M4 0v8" : "M0 4h8"}" stroke="#666" stroke-width="2"/></svg></button>` : "";
const rail = (s, first, last) => `<span class="relative flex w-5 shrink-0 items-center self-stretch">${vline(first,last)}<span class="absolute top-1/2 right-0 left-[6px] h-px bg-[#666]"></span>${toggle(s)}</span>`;
document.getElementById("tree").innerHTML = tree.map(([t,i,s,l],k) => `<li class="flex flex-1 items-stretch pl-[9px]">${l===2
  ? `<span class="relative w-5 shrink-0">${vline(false,false)}</span>` : rail(s,k===0,k===9)}
  <span class="flex flex-1 items-center ${t==="alquileres" ? "bg-gradient-to-r from-[#ddd] from-85% to-transparent" : ""}">${l===2 ? rail(s,false,t==="peliculas") : ""}<svg class="size-4 shrink-0"><use href="#${i}"/></svg><a href="#" class="ml-[3px]">${t}</a></span></li>`).join("");
</script>
</body>
</html>
